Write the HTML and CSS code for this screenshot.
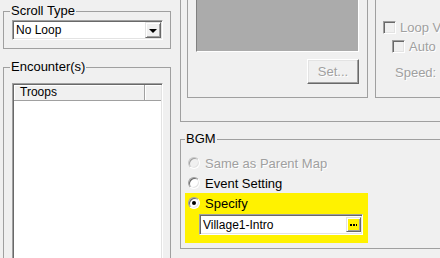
FILE: index.html
```html
<!DOCTYPE html>
<html>
<head>
  <title>Map Properties</title>
  <link rel="stylesheet" href="styles.css">
</head>
<body>
  <div class="left-col">
    <fieldset class="group scroll-group">
      <legend>Scroll Type</legend>
      <div class="combo">
        <span class="combo-value">No Loop</span>
        <span class="combo-btn"><span class="arrow"></span></span>
      </div>
    </fieldset>

    <fieldset class="group encounter-group">
      <legend>Encounter(s)</legend>
      <div class="list">
        <div class="list-header">
          <div class="list-col list-col-main">Troops</div>
          <div class="list-col list-col-rest"></div>
        </div>
      </div>
    </fieldset>
  </div>

  <div class="right-col">
    <div class="map-frame">
      <div class="box parallax-box">
        <div class="preview"></div>
        <div class="btn btn-disabled set-btn">Set...</div>
      </div>
      <div class="box loop-box">
        <label class="check-row disabled"><span class="check"></span>Loop Vertical</label>
        <label class="check-row disabled indent"><span class="check"></span>Auto</label>
        <div class="speed-row disabled">Speed:</div>
      </div>
    </div>

    <fieldset class="group bgm-group">
      <legend>BGM</legend>
      <div class="bgm-body">
        <label class="radio-row disabled"><span class="radio"></span>Same as Parent Map</label>
        <label class="radio-row"><span class="radio"></span>Event Setting</label>
        <div class="highlight">
          <label class="radio-row"><span class="radio checked"></span>Specify</label>
          <div class="picker">
            <span class="picker-value">Village1-Intro</span>
            <span class="picker-btn">
              <svg width="7" height="2" viewBox="0 0 7 2"><rect x="0" y="0" width="2" height="2"/><rect x="3" y="0" width="2" height="2"/><rect x="6" y="0" width="1" height="2"/></svg>
            </span>
          </div>
        </div>
      </div>
    </fieldset>
  </div>
</body>
</html>
```

FILE: styles.css
```css
body {
  margin: 0;
  width: 440px;
  height: 258px;
  overflow: hidden;
  display: flex;
  background: #f0f0f0;
  font-family: 'Liberation Sans', Arial, sans-serif;
  font-size: 13px;
  color: #000;
}

.left-col {
  width: 180px;
  flex: none;
}

.right-col {
  width: 300px;
  flex: none;
}

/* group boxes */
.group {
  margin: 0;
  padding: 0;
  border: 1px solid #a0a0a0;
  box-sizing: border-box;
  min-inline-size: 0;
}

.group legend {
  padding: 0 1px;
  margin-left: 6px;
  line-height: 14px;
}

.scroll-group {
  width: 168px;
  margin: 4px 0 0 3px;
  padding: 0 7px 8px 8px;
}

.scroll-group legend {
  margin-left: -2px;
}

.encounter-group {
  width: 168px;
  height: 230px;
  margin: 11px 0 0 3px;
  padding: 0 7px 0 8px;
}

.encounter-group legend {
  margin-left: -2px;
}

/* sunken controls */
.combo,
.list,
.picker {
  box-sizing: border-box;
  border: 1px solid;
  border-color: #a0a0a0 #fff #fff #a0a0a0;
  box-shadow: inset 1px 1px #696969, inset -1px -1px #e3e3e3;
  background: #fff;
}

.combo {
  width: 151px;
  height: 20px;
  margin-top: 2px;
  padding: 1px;
  display: flex;
  font-size: 12px;
}

.combo-value {
  flex: 1;
  padding-left: 2px;
  line-height: 16px;
}

.combo-btn,
.picker-btn {
  box-sizing: border-box;
  width: 16px;
  border: 1px solid;
  border-color: #e3e3e3 #696969 #696969 #e3e3e3;
  box-shadow: inset 1px 1px #fff, inset -1px -1px #a0a0a0;
  display: flex;
  align-items: center;
  justify-content: center;
}

.combo-btn {
  background: #f0f0f0;
}

.arrow {
  width: 0;
  height: 0;
  border-left: 4px solid transparent;
  border-right: 4px solid transparent;
  border-top: 4px solid #000;
  margin-top: 1px;
}

.list {
  width: 151px;
  height: 180px;
  margin-top: 9px;
  padding: 1px;
  font-size: 12px;
}

.list-header {
  display: flex;
  height: 16px;
  border-bottom: 1px solid #a0a0a0;
  box-sizing: border-box;
  background: #f0f0f0;
}

.list-col {
  line-height: 15px;
  box-shadow: inset 1px 1px #fff;
}

.list-col-main {
  width: 131px;
  padding-left: 6px;
  box-sizing: border-box;
  border-right: 1px solid #a0a0a0;
}

.list-col-rest {
  flex: 1;
}

/* map preview area */
.map-frame {
  display: flex;
  gap: 7px;
  margin-top: -20px;
  padding: 7px 0 23px 6px;
  border: 1px solid #a0a0a0;
}

.box {
  box-sizing: border-box;
  height: 110px;
  border: 1px solid #a0a0a0;
}

.parallax-box {
  width: 181px;
  flex: none;
  padding: 3px 8px 0 8px;
  display: flex;
  flex-direction: column;
}

.preview {
  height: 60px;
  box-sizing: border-box;
  background: #ababab;
  border: 1px solid;
  border-color: #808080 #fff #fff #808080;
}

.btn {
  box-sizing: border-box;
  border: 1px solid;
  border-color: #fff #696969 #696969 #fff;
  box-shadow: inset -1px -1px #a0a0a0, inset 1px 1px #e3e3e3;
  text-align: center;
}

.set-btn {
  width: 52px;
  height: 25px;
  margin: 7px 0 0 auto;
  padding-top: 2px;
  line-height: 19px;
}

.disabled,
.btn-disabled {
  color: #a0a0a0;
  text-shadow: 1px 1px #fff;
}

.loop-box {
  flex: 1;
  padding: 29px 0 0 7px;
  white-space: nowrap;
}

.check-row {
  display: flex;
  align-items: center;
  height: 19px;
}

.check-row.indent {
  margin-left: 9px;
}

.check {
  width: 13px;
  height: 13px;
  box-sizing: border-box;
  margin-right: 4px;
  border: 1px solid;
  border-color: #a0a0a0 #fff #fff #a0a0a0;
  box-shadow: inset 1px 1px #696969, inset -1px -1px #e3e3e3;
  background: #f0f0f0;
}

.speed-row {
  margin: 7px 0 0 12px;
  line-height: 19px;
}

/* BGM */
.bgm-group {
  width: 300px;
  margin-top: 10px;
}

.bgm-group legend {
  margin-left: 4px;
}

.bgm-body {
  padding: 7px 0 5px 4px;
}

.radio-row {
  display: flex;
  align-items: center;
  height: 20px;
  padding-left: 3px;
}

.radio {
  position: relative;
  width: 12px;
  height: 12px;
  box-sizing: border-box;
  margin-right: 5px;
  border-radius: 50%;
  border: 1px solid;
  border-color: #a0a0a0 #fff #fff #a0a0a0;
  box-shadow: inset 1px 1px #696969, inset -1px -1px #e3e3e3;
  background: #fff;
}

.disabled .radio {
  background: #f0f0f0;
  border-color: #c8c8c8 #fff #fff #c8c8c8;
  box-shadow: inset 1px 1px #a0a0a0, inset -1px -1px #e3e3e3;
}

.radio.checked::after {
  content: "";
  position: absolute;
  left: 3px;
  top: 3px;
  width: 4px;
  height: 4px;
  border-radius: 50%;
  background: #000;
}

.highlight {
  width: 183px;
  padding-bottom: 8px;
  background: #fff200;
}

.picker {
  width: 164px;
  height: 21px;
  margin: 1px 0 0 14px;
  padding: 2px 1px 2px 2px;
  display: flex;
  font-size: 12px;
}

.picker-value {
  flex: 1;
  padding-left: 1px;
  line-height: 17px;
}

.picker-btn {
  width: 15px;
  background: #fff200;
}
```
